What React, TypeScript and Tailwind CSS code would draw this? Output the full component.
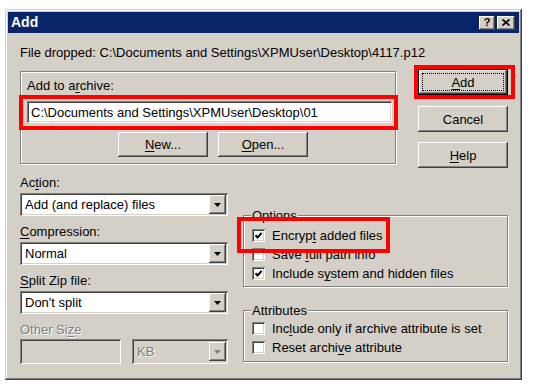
import React from 'react'

const field =
  'shadow-[inset_1px_1px_#808080,inset_-1px_-1px_#ffffff,inset_2px_2px_#404040,inset_-2px_-2px_#d4d0c8]'
const raised =
  'bg-[#d4d0c8] shadow-[inset_-1px_-1px_#404040,inset_1px_1px_#ffffff,inset_-2px_-2px_#808080,inset_2px_2px_#d4d0c8]'
const etched = 'border border-[#808080] shadow-[inset_1px_1px_#ffffff,1px_1px_#ffffff]'

const U = ({ c }: { c: string }) => <span className="underline underline-offset-[2px]">{c}</span>

function Btn({ children, def }: { children: React.ReactNode; def?: boolean }) {
  if (def) {
    return (
      <div className="w-[90px] h-[26px] border border-black">
        <div className={`h-full ${raised} p-[3px]`}>
          <div className="h-full border border-dotted border-black flex items-center justify-center">
            {children}
          </div>
        </div>
      </div>
    )
  }
  return <div className={`w-[90px] h-[26px] ${raised} flex items-center justify-center`}>{children}</div>
}

function Arrow({ gray }: { gray?: boolean }) {
  return (
    <div className={`w-[17px] h-[19px] ${raised} flex items-center justify-center`}>
      <svg width="7" height="4" viewBox="0 0 7 4">
        <path d="M0 0H7L3.5 4Z" fill={gray ? '#808080' : '#000'} />
      </svg>
    </div>
  )
}

function Select({ text, cls }: { text: string; cls: string }) {
  return (
    <div className={`${cls} h-[23px] bg-white ${field} flex items-center pl-[5px] pr-[2px]`}>
      <span className="flex-1">{text}</span>
      <Arrow />
    </div>
  )
}

function Check({ on }: { on?: boolean }) {
  return (
    <div className={`w-[13px] h-[13px] bg-white ${field} flex items-center justify-center shrink-0`}>
      {on && (
        <svg width="9" height="9" viewBox="0 0 9 9">
          <path d="M1.5 4.2L3.6 6.4L7.6 1.8" stroke="#000" strokeWidth="2" fill="none" />
        </svg>
      )}
    </div>
  )
}

function Row({ on, children }: { on?: boolean; children: React.ReactNode }) {
  return (
    <div className="h-[19px] flex items-center gap-[7px]">
      <Check on={on} />
      <span>{children}</span>
    </div>
  )
}

export default function App() {
  return (
    <div
      className="relative w-[535px] h-[389px] bg-white pt-[9px] pl-[5px] text-[13px] leading-[15px] text-black"
      style={{ fontFamily: '"Liberation Sans", Arial, sans-serif' }}
    >
      <div className="w-[517px] h-[371px] bg-[#d4d0c8] p-[3px] shadow-[inset_-1px_-1px_#404040,inset_1px_1px_#d4d0c8,inset_-2px_-2px_#808080,inset_2px_2px_#ffffff]">
        {/* title bar */}
        <div className="h-[21px] bg-[#0a246a] flex items-center justify-between pl-[3px] pr-[4px]">
          <span className="text-white font-bold text-[14px]">Add</span>
          <div className="flex gap-[2px]">
            <div className={`w-[16px] h-[14px] ${raised} flex items-center justify-center text-[11px] font-bold leading-none`}>?</div>
            <div className={`w-[18px] h-[14px] ${raised} flex items-center justify-center`}>
              <svg width="8" height="7" viewBox="0 0 8 7">
                <path d="M0.5 0.5L7.5 6.5M7.5 0.5L0.5 6.5" stroke="#000" strokeWidth="1.6" />
              </svg>
            </div>
          </div>
        </div>

        <div className="pl-[12px]">
          <div className="mt-[12px] h-[15px]">File dropped: C:\Documents and Settings\XPMUser\Desktop\4117.p12</div>

          <div className="mt-[9px] flex items-start">
            <div className={`mt-[2px] w-[376px] ${etched} pl-[6px] pt-[6px] pb-[6px]`}>
              <div className="h-[15px]">
                Add to a<U c="r" />chive:
              </div>
              <div className={`mt-[8px] w-[365px] h-[22px] bg-white ${field} flex items-center pl-[4px]`}>
                C:\Documents and Settings\XPMUser\Desktop\01
              </div>
              <div className="mt-[9px] ml-[91px] flex gap-[10px]">
                <div className={`w-[90px] h-[25px] ${raised} flex items-center justify-center`}>
                  <span><U c="N" />ew...</span>
                </div>
                <div className={`w-[90px] h-[25px] ${raised} flex items-center justify-center`}>
                  <span><U c="O" />pen...</span>
                </div>
              </div>
            </div>

            <div className="ml-[22px] flex flex-col">
              <Btn def>
                <span><U c="A" />dd</span>
              </Btn>
              <div className="mt-[11px]">
                <Btn>Cancel</Btn>
              </div>
              <div className="mt-[10px]">
                <Btn>
                  <span><U c="H" />elp</span>
                </Btn>
              </div>
            </div>
          </div>

          <div className="mt-[7px] flex items-start">
            {/* left column */}
            <div className="w-[208px] flex flex-col">
              <div className="h-[15px] mb-[3px]">Ac<U c="t" />ion:</div>
              <Select text="Add (and replace) files" cls="w-[208px]" />
              <div className="mt-[8px] h-[15px] mb-[3px]"><U c="C" />ompression:</div>
              <Select text="Normal" cls="w-[208px]" />
              <div className="mt-[8px] h-[15px] mb-[3px]"><U c="S" />plit Zip file:</div>
              <Select text="Don't split" cls="w-[208px]" />
              <div className="mt-[8px] h-[15px] mb-[2px] text-[#808080] [text-shadow:1px_1px_#ffffff]">
                Other Si<U c="z" />e
              </div>
              <div className="flex gap-[11px]">
                <div className={`w-[101px] h-[25px] bg-[#d4d0c8] ${field}`} />
                <div className={`w-[96px] h-[25px] bg-[#d4d0c8] ${field} flex items-center pl-[5px] pr-[2px]`}>
                  <span className="flex-1 text-[#808080] [text-shadow:1px_1px_#ffffff]">KB</span>
                  <Arrow gray />
                </div>
              </div>
            </div>

            {/* right column */}
            <div className="ml-[15px] w-[265px] mt-[33px] flex flex-col">
              <fieldset className={`${etched} pl-[8px] pt-[3px] pb-[3px]`}>
                <legend className="px-[1px] -ml-[1px] bg-[#d4d0c8] h-[15px]">Options</legend>
                <Row on>Encryp<U c="t" /> added files</Row>
                <Row>Save <U c="f" />ull path info</Row>
                <Row on>Include s<U c="y" />stem and hidden files</Row>
              </fieldset>
              <fieldset className={`mt-[16px] ${etched} pl-[8px] pt-[1px] pb-[4px]`}>
                <legend className="px-[1px] -ml-[1px] bg-[#d4d0c8] h-[15px]">Attributes</legend>
                <Row>Inc<U c="l" />ude only if archive attribute is set</Row>
                <Row>Reset archi<U c="v" />e attribute</Row>
              </fieldset>
            </div>
          </div>
        </div>
      </div>

      {/* red highlight annotations */}
      <div className="absolute left-[19px] top-[95px] w-[379px] h-[35px] border-4 border-[#ff0000]" />
      <div className="absolute left-[414px] top-[65px] w-[101px] h-[34px] border-4 border-[#ff0000]" />
      <div className="absolute left-[237px] top-[217px] w-[153px] h-[36px] border-4 border-[#ff0000]" />
    </div>
  )
}
